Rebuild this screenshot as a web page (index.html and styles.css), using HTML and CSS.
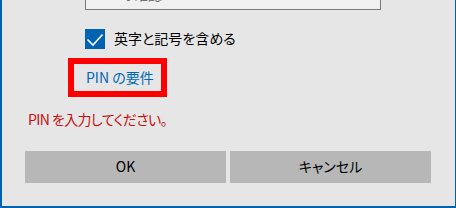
FILE: index.html
```html
<!DOCTYPE html>
<html lang="ja">
<head>
    <meta charset="UTF-8">
    <title>PIN の設定</title>
    <link rel="stylesheet" href="styles.css">
</head>
<body>
    <div class="dialog">
        <div class="pin-field">
            <input class="pin-input" type="text" placeholder="PIN の確認">
        </div>
        <label class="check-row">
            <span class="checkbox">
                <svg width="20" height="20" viewBox="0 0 20 20">
                    <path d="M2.5 10.5 L8 16 L17.5 5.5" fill="none" stroke="#fff" stroke-width="1.6"/>
                </svg>
            </span>
            <span class="check-label">英字と記号を含める</span>
        </label>
        <div class="link-row">
            <a href="#" class="req-link">PIN の要件</a>
        </div>
        <p class="error">PIN を入力してください。</p>
        <div class="buttons">
            <button class="btn">OK</button>
            <button class="btn">キャンセル</button>
        </div>
    </div>
</body>
</html>
```

FILE: styles.css
```css
body {
    margin: 0;
    overflow: hidden;
    font-family: "Noto Sans CJK JP", "Noto Sans", sans-serif;
    font-feature-settings: "palt";
    font-size: 14px;
    background: #e6e6e6;
}
.dialog {
    height: 208px;
    box-sizing: border-box;
    border-left: 2px solid #0063b1;
    border-right: 1px solid #0063b1;
    border-bottom: 2px solid #0063b1;
    padding-left: 23px;
    overflow: hidden;
}
/* 入力欄（上が切れている） */
.pin-field {
    margin-top: -22px;
    margin-left: 60px;
}
.pin-input {
    display: block;
    width: 296px;
    height: 32px;
    box-sizing: border-box;
    border: 1px solid #7a7a7a;
    background: #f0f0f0;
    padding: 0 8px;
    font: inherit;
    color: #000;
}
.pin-input::placeholder {
    color: #6d6d6d;
}

/* チェックボックス */
.check-row {
    display: flex;
    align-items: center;
    margin-top: 19px;
    margin-left: 60px;
    height: 20px;
}
.checkbox {
    width: 20px;
    height: 20px;
    background: #0063b1;
}
.checkbox svg {
    display: block;
}
.check-label {
    margin-left: 9px;
    padding-bottom: 3px;
    line-height: 20px;
    color: #000;
}

/* リンク（赤枠はフォーカス表示） */
.link-row {
    display: flex;
    margin-top: 9px;
    margin-left: 43px;
}
.req-link {
    display: block;
    border: 6px solid #ff0000;
    padding: 0 7px 1px 12px;
    line-height: 26px;
    white-space: nowrap;
    color: #0067b8;
    text-decoration: none;
}

.error {
    margin: 12px 0 0 3px;
    line-height: 20px;
    color: #c80f0f;
    letter-spacing: -0.6px;
}

/* ボタン */
.buttons {
    display: flex;
    gap: 4px;
    margin-top: 22px;
}
.btn {
    width: 201px;
    height: 32px;
    border: none;
    background: #b7b7b7;
    font: inherit;
    color: #000;
    padding: 0 0 2px;
}
```
